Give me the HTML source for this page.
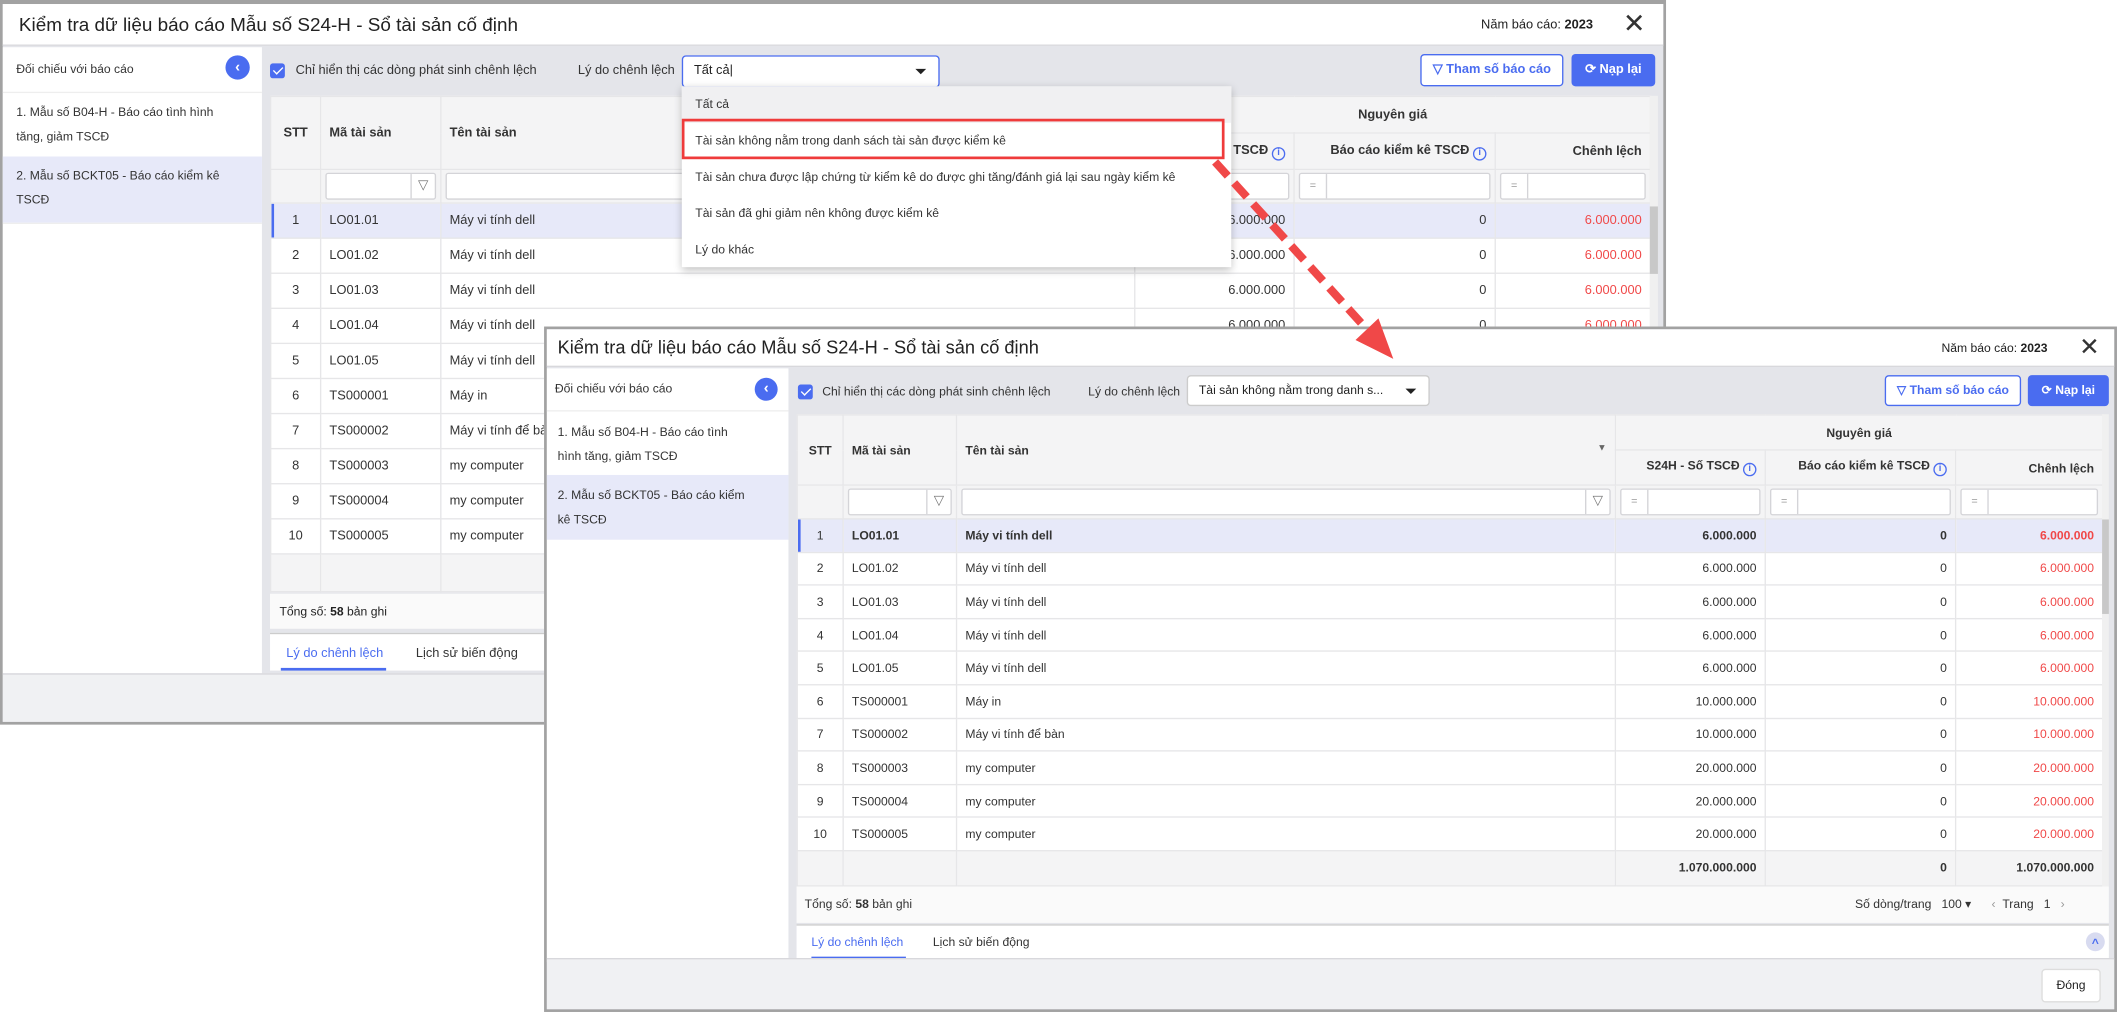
<!DOCTYPE html>
<html><head><meta charset="utf-8">
<style>
*{box-sizing:border-box;margin:0;padding:0}
html,body{width:2117px;height:1012px;overflow:hidden;background:#fff;font-family:"Liberation Sans",Arial,sans-serif;color:#222}
#w{position:absolute;left:0;top:0;width:1568px;height:750px;transform:scale(1.3501,1.3493);transform-origin:0 0}
.dlg{position:absolute;background:#e4e5ea;border:2px solid #a2a2a2;overflow:hidden}
.abs{position:absolute}
.hdr{position:absolute;left:0;top:0;right:0;background:#fff;border-bottom:1px solid #d8d8dc}
.title{position:absolute;white-space:nowrap}
.yr{position:absolute;font-size:9.5px;white-space:nowrap}
.x{position:absolute;font-size:20px;font-weight:300;color:#333;line-height:1}
.left{position:absolute;left:0;background:#fff;font-size:9px}
.left .it{position:absolute;left:0;right:0;padding:0 24px 0 10px;line-height:18px;color:#333}
.circ{position:absolute;border-radius:50%;background:#4a6cf0;color:#fff;text-align:center;font-size:11px;font-weight:bold}
.chk{position:absolute;width:11px;height:11px;background:#4a6cf0;border-radius:2px}
.chk:after{content:"";position:absolute;left:3.5px;top:1px;width:3px;height:6px;border:solid #fff;border-width:0 1.5px 1.5px 0;transform:rotate(45deg)}
.t{position:absolute;white-space:nowrap;font-size:9.5px;color:#333}
.sel{position:absolute;background:#fff;border:1px solid #ccc;border-radius:3px;font-size:9.5px;padding-left:8px;white-space:nowrap}
.sel:after{content:"";position:absolute;right:9px;top:50%;margin-top:-2px;border:4px solid transparent;border-top:4px solid #222;border-bottom:0}
.btn1{position:absolute;background:#fff;border:1px solid #4a6cf0;border-radius:3px;color:#4a6cf0;font-size:9.5px;font-weight:bold;text-align:center;white-space:nowrap}
.btn2{position:absolute;background:#4a6cf0;border-radius:3px;color:#fff;font-size:9.5px;font-weight:bold;text-align:center;white-space:nowrap}
table{position:absolute;border-collapse:collapse;table-layout:fixed;background:#fff;font-size:9.5px}
td{border:1px solid #e6e6e8;white-space:nowrap;overflow:hidden;padding:0 6px;color:#333}
tr.h td{background:#f4f4f5;font-weight:bold;color:#333}
tr.f td{background:#f4f4f5;padding:2px 3px}
.fi{height:20px;background:#fff;border:1px solid #d4d4d8;border-radius:2px;position:relative}
.eq{position:absolute;left:0;top:0;bottom:0;width:20px;border-right:1px solid #d4d4d8;text-align:center;font-size:8px;color:#999;line-height:18px}
.fl{position:absolute;right:0;top:0;bottom:0;width:18px;border-left:1px solid #d4d4d8;text-align:center;font-size:10px;color:#777;line-height:18px}
.c{text-align:center}.r{text-align:right}.red{color:#f04848}
tr.sel1 td{background:#e7e9f9}
tr.sel1 td:first-child{box-shadow:inset 2px 0 0 #4a6cf0}
tr.tot td{background:#f4f4f5;font-weight:bold}
.i{display:inline-block;width:10px;height:10px;border:1px solid #4a6cf0;border-radius:50%;color:#4a6cf0;font-size:7px;line-height:8px;text-align:center;vertical-align:-1px;font-weight:bold}
.foot{position:absolute;background:#fff;font-size:9px}
.tabs{position:absolute;background:#fff;font-size:9.5px}
.bot{position:absolute;left:0;right:0;bottom:0;background:#f0f1f3;border-top:1px solid #d8d8dc}
.dd{position:absolute;background:#fff;box-shadow:0 2px 6px rgba(0,0,0,.25);font-size:9px;z-index:5}
.dd div{height:27px;line-height:27px;padding-left:10px;white-space:nowrap;color:#333}
</style></head><body><div id="w">

<!-- OLD DIALOG -->
<div class="dlg" style="left:0;top:0;width:1234px;height:537px;border-top-width:3px">
 <div class="hdr" style="height:31px"><div class="title" style="left:12px;top:7px;font-size:14px">Kiểm tra dữ liệu báo cáo Mẫu số S24-H - Sổ tài sản cố định</div>
  <div class="yr" style="left:1095px;top:10px">Năm báo cáo: <b>2023</b></div><div class="x" style="left:1200px;top:5px">✕</div></div>
 <div class="left" style="top:32px;width:192px;height:464px">
  <div class="it" style="top:7px">Đối chiếu với báo cáo</div>
  <div class="circ" style="left:165px;top:6px;width:18px;height:18px;line-height:18px">‹</div>
  <div class="it" style="top:33px;height:49px;padding-top:5px;border-top:1px solid #eee">1. Mẫu số B04-H - Báo cáo tình hình tăng, giảm TSCĐ</div>
  <div class="it" style="top:81px;height:49px;padding-top:5px;background:#e7e9f9">2. Mẫu số BCKT05 - Báo cáo kiểm kê TSCĐ</div>
  <div class="it" style="top:130px;border-top:1px solid #eee"></div>
 </div>
 <div class="chk" style="left:198px;top:44px"></div>
 <div class="t" style="left:217px;top:44px">Chỉ hiển thị các dòng phát sinh chênh lệch</div>
 <div class="t" style="left:426px;top:44px">Lý do chênh lệch</div>
 <div class="sel" style="left:503px;top:38px;width:191px;height:24px;line-height:22px;border-color:#4a6cf0">Tất cả|</div>
 <div class="btn1" style="left:1050px;top:37px;width:106px;height:24px;line-height:22px">▽ Tham số báo cáo</div>
 <div class="btn2" style="left:1162px;top:37px;width:62px;height:24px;line-height:24px">⟳ Nạp lại</div>
 <table style="left:198px;top:68px;width:1022px">
  <colgroup><col style="width:37px"><col style="width:89px"><col style="width:514px"><col style="width:118px"><col style="width:149px"><col style="width:115px"></colgroup>
  <tr class="h" style="height:27px"><td class="c" rowspan="2">STT</td><td rowspan="2">Mã tài sản</td><td rowspan="2">Tên tài sản</td><td colspan="3" class="c">Nguyên giá</td></tr>
  <tr class="h" style="height:27px"><td class="r">S24H - Số TSCĐ <span class="i">i</span></td><td class="r">Báo cáo kiểm kê TSCĐ <span class="i">i</span></td><td class="r">Chênh lệch</td></tr>
  <tr class="f" style="height:25px"><td></td><td><div class="fi"><div class="fl">▽</div></div></td><td><div class="fi"></div></td><td><div class="fi"><div class="eq">=</div></div></td><td><div class="fi"><div class="eq">=</div></div></td><td><div class="fi"><div class="eq">=</div></div></td></tr>
  <tr class="sel1" style="height:26px"><td class="c">1</td><td>LO01.01</td><td>Máy vi tính dell</td><td class="r">6.000.000</td><td class="r">0</td><td class="r red">6.000.000</td></tr>
  <tr style="height:26px"><td class="c">2</td><td>LO01.02</td><td>Máy vi tính dell</td><td class="r">6.000.000</td><td class="r">0</td><td class="r red">6.000.000</td></tr>
  <tr style="height:26px"><td class="c">3</td><td>LO01.03</td><td>Máy vi tính dell</td><td class="r">6.000.000</td><td class="r">0</td><td class="r red">6.000.000</td></tr>
  <tr style="height:26px"><td class="c">4</td><td>LO01.04</td><td>Máy vi tính dell</td><td class="r">6.000.000</td><td class="r">0</td><td class="r red">6.000.000</td></tr>
  <tr style="height:26px"><td class="c">5</td><td>LO01.05</td><td>Máy vi tính dell</td><td class="r">6.000.000</td><td class="r">0</td><td class="r red">6.000.000</td></tr>
  <tr style="height:26px"><td class="c">6</td><td>TS000001</td><td>Máy in</td><td class="r">10.000.000</td><td class="r">0</td><td class="r red">10.000.000</td></tr>
  <tr style="height:26px"><td class="c">7</td><td>TS000002</td><td>Máy vi tính để bàn</td><td class="r">10.000.000</td><td class="r">0</td><td class="r red">10.000.000</td></tr>
  <tr style="height:26px"><td class="c">8</td><td>TS000003</td><td>my computer</td><td class="r">20.000.000</td><td class="r">0</td><td class="r red">20.000.000</td></tr>
  <tr style="height:26px"><td class="c">9</td><td>TS000004</td><td>my computer</td><td class="r">20.000.000</td><td class="r">0</td><td class="r red">20.000.000</td></tr>
  <tr style="height:26px"><td class="c">10</td><td>TS000005</td><td>my computer</td><td class="r">20.000.000</td><td class="r">0</td><td class="r red">20.000.000</td></tr>
  <tr class="tot" style="height:28px"><td></td><td></td><td></td><td></td><td></td><td></td></tr>
 </table>
 <div class="abs" style="left:1220px;top:68px;width:6px;height:369px;background:#f0f0f0"><div style="margin-top:82px;height:50px;background:#c8c8c8"></div></div>
 <div class="foot" style="left:198px;top:437px;width:1028px;height:26px;padding:8px 7px;background:#fafafa">Tổng số: <b>58</b> bản ghi</div>
 <div class="tabs" style="left:198px;top:466px;width:1028px;height:28px;border-top:1px solid #ccc">
  <div class="t" style="left:12px;top:9px;color:#4a6cf0">Lý do chênh lệch</div><div class="abs" style="left:8px;top:25px;width:78px;height:2px;background:#4a6cf0"></div>
  <div class="t" style="left:108px;top:9px">Lịch sử biến động</div></div>
 <div class="bot" style="height:36px"></div>
</div>
<div class="dd" style="left:505px;top:64px;width:407px;height:134px">
 <div style="background:#f0f0f2">Tất cả</div>
 <div>Tài sản không nằm trong danh sách tài sản được kiểm kê</div>
 <div>Tài sản chưa được lập chứng từ kiểm kê do được ghi tăng/đánh giá lại sau ngày kiểm kê</div>
 <div>Tài sản đã ghi giảm nên không được kiểm kê</div>
 <div>Lý do khác</div>
</div>
<div class="abs" style="left:505px;top:88px;width:402px;height:30px;border:2px solid #ef3b3b;z-index:6"></div>

<!-- NEW DIALOG -->
<div class="dlg" style="left:403px;top:242px;width:1165px;height:508px;z-index:7">
 <div class="hdr" style="height:28px"><div class="title" style="left:8px;top:6px;font-size:13.5px">Kiểm tra dữ liệu báo cáo Mẫu số S24-H - Sổ tài sản cố định</div>
  <div class="yr" style="left:1033px;top:9px;font-size:9px">Năm báo cáo: <b>2023</b></div><div class="x" style="left:1135px;top:4px;font-size:18px">✕</div></div>
 <div class="left" style="top:29px;width:179px;height:440px">
  <div class="it" style="top:6px;padding-left:6px">Đối chiếu với báo cáo</div>
  <div class="circ" style="left:154px;top:7px;width:17px;height:17px;line-height:17px">‹</div>
  <div class="it" style="top:31px;height:49px;padding-top:6px;padding-left:8px;padding-right:30px;border-top:1px solid #eee">1. Mẫu số B04-H - Báo cáo tình hình tăng, giảm TSCĐ</div>
  <div class="it" style="top:79px;height:48px;padding-top:6px;padding-left:8px;padding-right:30px;background:#e7e9f9">2. Mẫu số BCKT05 - Báo cáo kiểm kê TSCĐ</div>
 </div>
 <div class="chk" style="left:186px;top:41px"></div>
 <div class="t" style="left:204px;top:41px;font-size:9px">Chỉ hiển thị các dòng phát sinh chênh lệch</div>
 <div class="t" style="left:401px;top:41px;font-size:9px">Lý do chênh lệch</div>
 <div class="sel" style="left:474px;top:34px;width:180px;height:23px;line-height:21px;font-size:9px">Tài sản không nằm trong danh s...</div>
 <div class="btn1" style="left:991px;top:34px;width:101px;height:23px;line-height:21px;font-size:9px">▽ Tham số báo cáo</div>
 <div class="btn2" style="left:1097px;top:34px;width:60px;height:23px;line-height:23px;font-size:9px">⟳ Nạp lại</div>
 <table style="left:185px;top:63px;width:967px;font-size:9px">
  <colgroup><col style="width:34px"><col style="width:84px"><col style="width:488px"><col style="width:111px"><col style="width:141px"><col style="width:109px"></colgroup>
  <tr class="h" style="height:26px"><td class="c" rowspan="2">STT</td><td rowspan="2">Mã tài sản</td><td rowspan="2">Tên tài sản<span style="float:right;font-size:7px;color:#666">▼</span></td><td colspan="3" class="c">Nguyên giá</td></tr>
  <tr class="h" style="height:26px"><td class="r">S24H - Số TSCĐ <span class="i">i</span></td><td class="r">Báo cáo kiểm kê TSCĐ <span class="i">i</span></td><td class="r">Chênh lệch</td></tr>
  <tr class="f" style="height:25px"><td></td><td><div class="fi"><div class="fl">▽</div></div></td><td><div class="fi"><div class="fl">▽</div></div></td><td><div class="fi"><div class="eq">=</div></div></td><td><div class="fi"><div class="eq">=</div></div></td><td><div class="fi"><div class="eq">=</div></div></td></tr>
  <tr class="sel1" style="height:24.6px;font-weight:bold"><td class="c" style="font-weight:normal">1</td><td>LO01.01</td><td>Máy vi tính dell</td><td class="r">6.000.000</td><td class="r">0</td><td class="r red">6.000.000</td></tr>
  <tr style="height:24.6px"><td class="c">2</td><td>LO01.02</td><td>Máy vi tính dell</td><td class="r">6.000.000</td><td class="r">0</td><td class="r red">6.000.000</td></tr>
  <tr style="height:24.6px"><td class="c">3</td><td>LO01.03</td><td>Máy vi tính dell</td><td class="r">6.000.000</td><td class="r">0</td><td class="r red">6.000.000</td></tr>
  <tr style="height:24.6px"><td class="c">4</td><td>LO01.04</td><td>Máy vi tính dell</td><td class="r">6.000.000</td><td class="r">0</td><td class="r red">6.000.000</td></tr>
  <tr style="height:24.6px"><td class="c">5</td><td>LO01.05</td><td>Máy vi tính dell</td><td class="r">6.000.000</td><td class="r">0</td><td class="r red">6.000.000</td></tr>
  <tr style="height:24.6px"><td class="c">6</td><td>TS000001</td><td>Máy in</td><td class="r">10.000.000</td><td class="r">0</td><td class="r red">10.000.000</td></tr>
  <tr style="height:24.6px"><td class="c">7</td><td>TS000002</td><td>Máy vi tính để bàn</td><td class="r">10.000.000</td><td class="r">0</td><td class="r red">10.000.000</td></tr>
  <tr style="height:24.6px"><td class="c">8</td><td>TS000003</td><td>my computer</td><td class="r">20.000.000</td><td class="r">0</td><td class="r red">20.000.000</td></tr>
  <tr style="height:24.6px"><td class="c">9</td><td>TS000004</td><td>my computer</td><td class="r">20.000.000</td><td class="r">0</td><td class="r red">20.000.000</td></tr>
  <tr style="height:24.6px"><td class="c">10</td><td>TS000005</td><td>my computer</td><td class="r">20.000.000</td><td class="r">0</td><td class="r red">20.000.000</td></tr>
  <tr class="tot" style="height:26px"><td></td><td></td><td></td><td class="r">1.070.000.000</td><td class="r">0</td><td class="r">1.070.000.000</td></tr>
 </table>
 <div class="abs" style="left:1152px;top:63px;width:5px;height:350px;background:#f0f0f0"><div style="margin-top:78px;height:70px;background:#c8c8c8"></div></div>
 <div class="foot" style="left:185px;top:413px;width:972px;height:27px;background:#fafafa">
  <div class="t" style="left:6px;top:8px;font-size:9px">Tổng số: <b>58</b> bản ghi</div>
  <div class="t" style="left:784px;top:8px;font-size:9px">Số dòng/trang &nbsp; 100 ▾ &nbsp;&nbsp;&nbsp;&nbsp; <span style="color:#999">‹</span> &nbsp;Trang &nbsp; 1 &nbsp; <span style="color:#999">›</span></div></div>
 <div class="tabs" style="left:185px;top:441px;width:972px;height:27px;border-top:1px solid #ccc">
  <div class="t" style="left:11px;top:7px;color:#4a6cf0;font-size:9px">Lý do chênh lệch</div><div class="abs" style="left:11px;top:23px;width:70px;height:2px;background:#4a6cf0"></div>
  <div class="t" style="left:101px;top:7px;font-size:9px">Lịch sử biến động</div>
  <div class="circ" style="left:955px;top:5px;width:14px;height:14px;line-height:16px;background:#d8dbf0;color:#4a6cf0;font-size:9px">^</div></div>
 <div class="bot" style="height:38px"><div class="abs" style="left:1107px;top:7px;width:44px;height:25px;background:#fff;border:1px solid #ddd;border-radius:3px;font-size:9px;text-align:center;line-height:23px">Đóng</div></div>
</div>

<!-- ARROW -->
<svg class="abs" style="left:0;top:0;z-index:9" width="1568" height="750">
 <line x1="900" y1="120" x2="1016" y2="248" stroke="#f04848" stroke-width="6" stroke-dasharray="14,7"/>
 <polygon points="1032,266 1004,252 1021,236" fill="#f04848"/>
</svg>
</div></body></html>
